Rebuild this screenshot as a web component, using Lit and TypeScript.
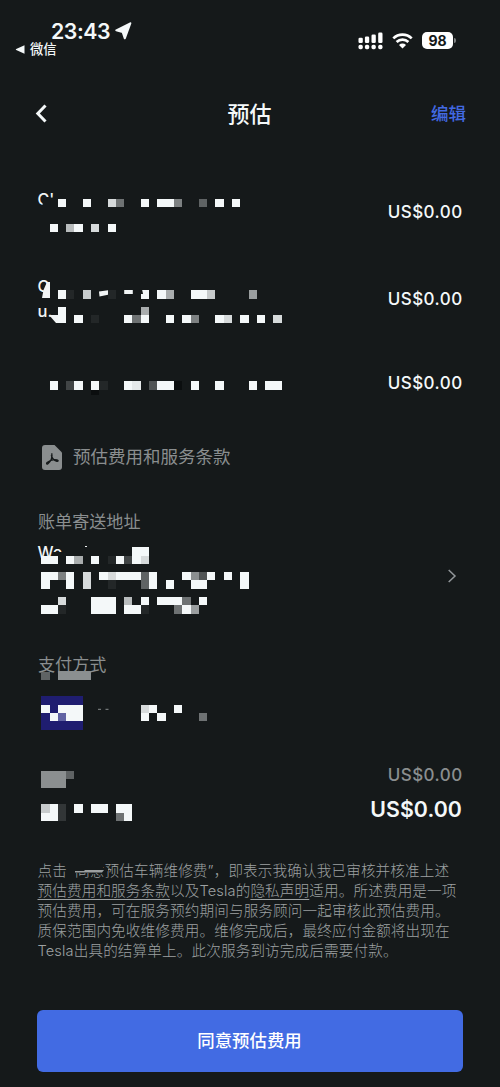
import { LitElement, html, svg, css } from "lit";
import { customElement, property } from "lit/decorators.js";

const CELL = 8.29;
const X0 = 41.3;
const Y0 = 199.1;

const shade = (c: string): string => {
  if (c === "p") return "#6163a3";
  if (c === "0") return "#0b0e0f";
  const t = parseInt(c, 16) / 15;
  const lo = [20, 24, 25];
  const hi = [244, 248, 249];
  return `rgb(${lo.map((v, i) => Math.round(v + (hi[i] - v) * t)).join(",")})`;
};

/** Row index on the shared grid -> one character per cell ("." is empty). */
type Rows = Record<number, string>;

/** Pixelated cover over private text, clipped to a band of the shared grid. */
@customElement("mosaic-band")
export class MosaicBand extends LitElement {
  static styles = css`
    :host { display: block; }
    svg { display: block; }
    rect { shape-rendering: crispEdges; }
    text { font-family: Inter, "Liberation Sans", sans-serif; font-weight: 500; fill: #f2f5f6; }
  `;
  @property({ attribute: false }) rows: Rows = {};
  @property({ attribute: false }) under: unknown = null;
  @property({ attribute: false }) over: unknown = null;
  @property({ type: Number }) top = 0;
  @property({ type: Number }) band = 20;

  render() {
    const cells = Object.entries(this.rows).flatMap(([r, line]) => {
      const y = Math.round(Y0 + Number(r) * CELL);
      const h = Math.round(Y0 + (Number(r) + 1) * CELL) - y;
      return [...line].map((c, i) => {
        if (c === ".") return null;
        const x = Math.round(X0 + i * CELL);
        const w = Math.round(X0 + (i + 1) * CELL) - x;
        return svg`<rect x=${x} y=${y} width=${w} height=${h} fill=${shade(c)}></rect>`;
      });
    });
    return html`<svg width="262" height=${this.band} viewBox="37 ${this.top} 262 ${this.band}">
      ${this.under}${cells}${this.over}
    </svg>`;
  }
}

const BG = "#15191a";

@customElement("app-root")
export class AppRoot extends LitElement {
  static styles = css`
    :host {
      display: block;
      height: 1087px;
      background: #15191a;
      color: #f4f8f9;
      font-family: Inter, "Noto Sans CJK SC", sans-serif;
      overflow: hidden;
    }
    * { box-sizing: border-box; }
    svg { display: block; flex: none; }
    .status { display: flex; justify-content: space-between; height: 85px; padding: 20px 44px 0 15px; }
    .clock { display: flex; align-items: center; gap: 5px; height: 22px; padding-left: 36px; font-size: 21.3px; font-weight: 600; line-height: 22px; letter-spacing: -0.45px; }
    .back-app { display: flex; align-items: center; gap: 5px; height: 16px; margin-top: -1px; font-size: 13.3px; line-height: 16px; font-weight: 500; }
    .signals { display: flex; align-items: center; height: 41px; }
    .signals .wifi { margin-left: 9px; }
    .battery { width: 31px; height: 17px; margin-left: 9px; border-radius: 5px; background: #fff; color: #15191a; font-size: 14px; font-weight: 700; line-height: 17px; text-align: center; }
    .nub { width: 2px; height: 5px; margin-left: 1px; border-radius: 0 2px 2px 0; background: #7c7f80; }
    .nav { display: grid; grid-template-columns: 70px 1fr 70px; align-items: center; height: 57px; padding: 0 34px 0 35px; }
    .title { font-size: 22px; line-height: 30px; font-weight: 500; text-align: center; padding-right: 2px; }
    .edit { font-size: 17.5px; line-height: 24px; font-weight: 500; color: #4269e2; text-align: right; }
    .body { padding: 48px 38px 0 37px; }
    .line { display: flex; align-items: center; justify-content: space-between; }
    .line.second { margin-top: 39px; }
    .line.third { margin-top: 46px; }
    .price { margin-right: -0.6px; font-size: 17px; line-height: 22px; font-weight: 500; letter-spacing: 0.45px; }
    .doc { display: flex; align-items: center; gap: 11px; height: 26px; margin-top: 49px; padding-left: 5px; color: #8a8e8f; font-size: 17.5px; line-height: 26px; }
    .label { height: 20px; line-height: 20px; font-size: 17.1px; color: #8a8e8f; padding-left: 1px; }
    .billing { margin-top: 42px; }
    .address { margin-top: 5px; padding-right: 5px; }
    .payment { margin-top: 40px; }
    .card { margin-top: -7px; }
    .subtotal { margin-top: 31px; align-items: flex-start; }
    .subtotal .price { color: #8a8e8f; margin-top: -1px; }
    .total { margin-top: 6px; }
    .total .price { margin-right: 0; font-size: 21.3px; line-height: 28px; font-weight: 600; letter-spacing: 0.1px; }
    .terms { position: relative; margin: 38px -10px 0 0.5px; font-size: 14.6px; line-height: 20px; font-weight: 300; letter-spacing: 0.13px; color: #9da1a2; white-space: nowrap; }
    .terms u { text-underline-offset: 3px; text-decoration-thickness: 1px; }
    .first { word-spacing: -2.2px; }
    .smear { position: absolute; left: 31.5px; top: -1px; }
    .agree { display: block; width: 426px; height: 62px; margin-top: 49px; border: 0; border-radius: 6px; background: #426be3; color: #fff; font: 500 17.4px/62px Inter, "Noto Sans CJK SC", sans-serif; padding: 0 1px 0 0; }
  `;

  render() {
    return html`
      <header class="status">
        <div>
          <div class="clock">
            <span>23:43</span>
            <svg width="17" height="18" viewBox="0 0 17 18"><path d="M15.300 1.300 1.300 8.300 7.600 10 9.800 16.300z" fill="#f4f8f9" stroke="#f4f8f9" stroke-width="2" stroke-linejoin="round" /></svg>
          </div>
          <div class="back-app">
            <svg width="10" height="9" viewBox="0 0 10 9"><path d="M1.200 3.900 9.500 .2v8.600L1.200 5.100a.7.7 0 0 1 0-1.200z" fill="#f4f8f9" /></svg>
            <span>微信</span>
          </div>
        </div>
        <div class="signals">
          <svg width="25" height="18" viewBox="0 0 25 18" fill="#fff">
            <rect x=".5" y="5.800" width="4.300" height="5.200" rx="1.300" /><rect x="6.900" y="4.500" width="4.300" height="6.500" rx="1.300" />
            <rect x="13.500" y="2.500" width="4.300" height="8.500" rx="1.300" /><rect x="20.200" y=".6" width="4.300" height="10.400" rx="1.300" />
            <rect x=".5" y="12.800" width="4.300" height="4.400" rx="1.600" /><rect x="6.900" y="12.800" width="4.300" height="4.400" rx="1.600" />
            <rect x="13.500" y="12.800" width="4.300" height="4.400" rx="1.600" /><rect x="20.200" y="12.800" width="4.300" height="4.400" rx="1.600" />
          </svg>
          <svg class="wifi" width="21" height="16" viewBox="0 0 21 16">
            <path d="M1.300 5.400a13 13 0 0 1 18.400 0M4.600 9a8.400 8.400 0 0 1 11.800 0" fill="none" stroke="#fff" stroke-width="2.600" />
            <path d="M10.500 15.500 7 12a5 5 0 0 1 7 0z" fill="#fff" />
          </svg>
          <div class="battery">98</div>
          <div class="nub"></div>
        </div>
      </header>

      <nav class="nav">
        <svg width="12" height="19" viewBox="0 0 12 19"><path d="M10.500 1.500 2.800 9.500 10.500 17.500" fill="none" stroke="#f4f8f9" stroke-width="3" /></svg>
        <div class="title">预估</div>
        <div class="edit">编辑</div>
      </nav>

      <main class="body">
        <div class="line">
          <mosaic-band .top=${190} .band=${44}
            .rows=${{ 0: "..f..f..d6..f.ff7..5.f.f", 3: ".f.bf.d.f" }}
            .under=${svg`<text x="37.500" y="205" font-size="16">C'</text>
              <path d="M42.500 206v-5h8v6h-8z" fill=${BG} />`}></mosaic-band>
          <span class="price">US$0.00</span>
        </div>
        <div class="line second">
          <mosaic-band .top=${273} .band=${51}
            .rows=${{
              11: "..f1.c..1...f.fa..ffc....9",
              13: "..f.........a",
              14: "..f.f.1...f6f..f.f7..fd.f.f.d",
            }}
            .under=${svg`<text x="37.500" y="292" font-size="16">C</text><text x="37.500" y="317" font-size="16.500">u.</text>`}
            .over=${svg`<g fill="#f2f5f6"><path d="M47 282h3v16h-8l1.500-8z" /><path d="M99 291.500l9-1.200v4.500l-8.500 1.700z" />
              <path d="M124.200 290h8.600v4h-8.600z" /><path d="M49 315h9v8h-2z" /></g>
              <path d="M139 289h3l1 5h-2z" fill=${BG} />`}></mosaic-band>
          <span class="price">US$0.00</span>
        </div>
        <div class="line third">
          <mosaic-band .top=${370} .band=${25}
            .rows=${{ 22: ".f.3f.f1..fe.4ff0.f..f...f.ff", 23: "......0" }}></mosaic-band>
          <span class="price">US$0.00</span>
        </div>

        <div class="doc">
          <svg width="20" height="25" viewBox="0 0 20 25">
            <path d="M3 0h9.500L20 7.500V22a3 3 0 0 1-3 3H3a3 3 0 0 1-3-3V3a3 3 0 0 1 3-3z" fill="#8a8e8f" />
            <path d="M9.700 8.300c1.200 4-.9 8.500-4 10.600-1 .6-1.600-.4-.6-1.300 2.800-2.300 7.200-3.300 10.200-2.600 1.300.4 1 1.600-.5 1.300-2.700-.8-4.900-3.300-5.500-6.300" fill="none" stroke="#15191a" stroke-width="1.300" stroke-linejoin="round" />
          </svg>
          <span>预估费用和服务条款</span>
        </div>

        <div class="label billing">账单寄送地址</div>
        <div class="line address">
          <mosaic-band .top=${537} .band=${78}
            .rows=${{
              42: "...........ff",
              43: "ff.fa.f.1f3fd",
              45: "ff7f.d.fdfff5f...f84f.f.f",
              46: "f..f.d..1...5f.f..ff....f",
              48: "..d...fff.b.f.fff6.f",
              49: "ff1...fff.ff1...6f9",
            }}
            .under=${svg`<text x="37.500" y="557.500" font-size="16">We</text>
              <path d="M53 552h10v8H51z" fill=${BG} /><rect x="85" y="546" width="2" height="1" fill="#f2f5f6" />`}></mosaic-band>
          <svg width="10" height="14" viewBox="0 0 10 14"><path d="M1.700 1 8 7l-6.300 6" fill="none" stroke="#92979a" stroke-width="1.500" /></svg>
        </div>

        <div class="label payment">支付方式</div>
        <mosaic-band class="card" .top=${668} .band=${66}
          .rows=${{ 57: "5.8888", 61: "f.fff.......df..f", 62: ".fpff.......f.f....6" }}
          .under=${svg`<rect x="58" y="671" width="33" height="2" fill="#8a8e8f" />
            <rect x="41" y="696" width="42" height="34" fill="#1f1d70" />
            <path d="M98 709.300h3M105.500 709.300h3" stroke="#898d8e" />`}></mosaic-band>

        <div class="line subtotal">
          <mosaic-band .top=${765} .band=${24} .rows=${{ 69: "8885", 70: "888" }}></mosaic-band>
          <span class="price">US$0.00</span>
        </div>
        <div class="line total">
          <mosaic-band .top=${795} .band=${28} .rows=${{ 73: "cf2.f.ff.ff", 74: "ff2......6f" }}></mosaic-band>
          <span class="price">US$0.00</span>
        </div>

        <div class="terms">
          <span class="first">点击 “同意预估车辆维修费”，即表示我确认我已审核并核准上述</span><br /><u>预估费用和服务条款</u>以及Tesla的<u>隐私声明</u>适用。所述费用是一项<br />预估费用，可在服务预约期间与服务顾问一起审核此预估费用。<br />质保范围内免收维修费用。维修完成后，最终应付金额将出现在<br />Tesla出具的结算单上。此次服务到访完成后需要付款。
          <svg class="smear" width="50" height="20" viewBox="69 860 50 20">
            <path d="M69 860h34v8h5v3l-5 2H75v5h-6z" fill=${BG} />
            <path d="M75 871h9l1-1h19l-2 2.500H75z" fill="#9b9fa0" />
          </svg>
        </div>

        <button class="agree">同意预估费用</button>
      </main>
    `;
  }
}
